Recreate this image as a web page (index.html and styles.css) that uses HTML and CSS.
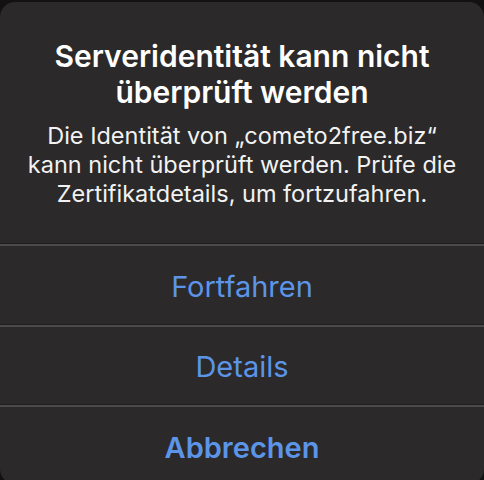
FILE: index.html
```html
<!DOCTYPE html>
<html lang="de">
<head>
<meta charset="utf-8">
<link rel="stylesheet" href="styles.css">
</head>
<body>
<div class="alert">
  <div class="header">
    <h1 class="title">Serveridentität kann nicht überprüft werden</h1>
    <p class="message">Die Identität von „cometo2free.biz“ kann nicht überprüft werden. Prüfe die Zertifikatdetails, um fortzufahren.</p>
  </div>
  <div class="action">Fortfahren</div>
  <div class="action">Details</div>
  <div class="action action-bold">Abbrechen</div>
</div>
</body>
</html>
```

FILE: styles.css
```css
html, body {
  margin: 0;
  padding: 0;
  background: #121212;
  width: 484px;
  height: 480px;
  overflow: hidden;
}
.alert {
  margin-top: 2px;
  width: 484px;
  height: 482px;
  background: #2b2929;
  border-radius: 15px;
  font-family: Inter, "Noto Sans", sans-serif;
  display: flex;
  flex-direction: column;
}
.header {
  padding: 36px 26px 36px;
  text-align: center;
}
.title {
  margin: 0;
  font-size: 30px;
  line-height: 36px;
  font-weight: 600;
  color: #ffffff;
}
.message {
  margin: 11px 0 0;
  font-size: 23.5px;
  line-height: 29px;
  font-weight: 400;
  color: #f2f2f2;
}
.action {
  flex: none;
  box-sizing: content-box;
  height: 75.5px;
  padding-top: 3px;
  border-top: 2px solid #4c4a4a;
  box-shadow: 0 -1px 0 #201f1f;
  display: flex;
  align-items: center;
  justify-content: center;
  font-size: 29px;
  line-height: 34px;
  color: #5c95e8;
}
.action-bold {
  font-weight: 600;
}
```
